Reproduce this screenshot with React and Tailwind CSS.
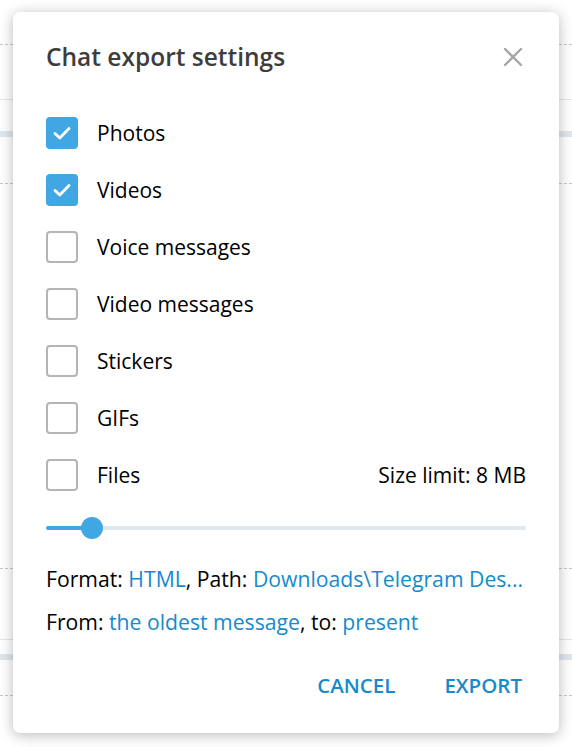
import React from "react";

const items = [
  { label: "Photos", checked: true },
  { label: "Videos", checked: true },
  { label: "Voice messages", checked: false },
  { label: "Video messages", checked: false },
  { label: "Stickers", checked: false },
  { label: "GIFs", checked: false },
];

function Box({ checked }) {
  if (checked) {
    return (
      <div className="w-[32px] h-[32px] rounded-[4px] bg-[#40a7e3] flex items-center justify-center shrink-0">
        <svg width="20" height="16" viewBox="0 0 20 16">
          <path d="M3 8.5 L7.8 13 L17 3.5" fill="none" stroke="white" strokeWidth="2.8" strokeLinecap="round" strokeLinejoin="round" />
        </svg>
      </div>
    );
  }
  return <div className="w-[32px] h-[32px] rounded-[4px] border-[2.5px] border-[#b5b5b5] shrink-0" />;
}

export default function App() {
  return (
    <div className="relative w-[572px] h-[747px] bg-white overflow-hidden" style={{ fontFamily: '"Open Sans", sans-serif' }}>
      <div className="absolute inset-0 flex flex-col">
        <div className="h-[44px]" />
        <div className="h-0 border-t border-dashed border-[#c8c8c8]" />
        <div className="h-[54px]" />
        <div className="h-0 border-t border-[#e6e6e6]" />
        <div className="h-[31px]" />
        <div className="h-[6px] bg-[#dfe7ee]" />
        <div className="h-[46px]" />
        <div className="h-0 border-t border-dashed border-[#c8c8c8]" />
        <div className="h-[384px]" />
        <div className="h-0 border-t border-dashed border-[#c8c8c8]" />
        <div className="h-[70px]" />
        <div className="h-0 border-t border-[#e6e6e6]" />
        <div className="h-[14px]" />
        <div className="h-[6px] bg-[#dfe7ee]" />
        <div className="h-[35px]" />
        <div className="h-0 border-t border-dashed border-[#c8c8c8]" />
      </div>
      <div className="absolute left-[13px] top-[12px] w-[546px] h-[721px] bg-white rounded-[7px] shadow-[0_2px_14px_rgba(0,0,0,0.28)] flex flex-col px-[33px]">
        <div className="flex items-start justify-between h-[105px] pt-[33px]">
          <div className="text-[24.5px] font-semibold text-[#3d3d3d] leading-none">Chat export settings</div>
          <svg width="20" height="20" viewBox="0 0 20 20" className="mr-[3px] mt-[2px]">
            <path d="M2 2 L18 18 M18 2 L2 18" stroke="#a6a6a6" strokeWidth="2.4" strokeLinecap="round" />
          </svg>
        </div>
        <div className="flex flex-col gap-[25px]">
          {items.map((it) => (
            <div key={it.label} className="flex items-center h-[32px]">
              <Box checked={it.checked} />
              <span className="ml-[19px] text-[21px] text-black leading-none">{it.label}</span>
            </div>
          ))}
          <div className="flex items-center h-[32px]">
            <Box checked={false} />
            <span className="ml-[19px] text-[21px] text-black leading-none">Files</span>
            <span className="ml-auto text-[21px] text-black leading-none">Size limit: 8 MB</span>
          </div>
        </div>
        <div className="relative mt-[26px] h-[22px] flex items-center">
          <div className="w-full h-[4px] rounded-full bg-[#e1e8ee]" />
          <div className="absolute left-0 top-[9px] w-[46px] h-[4px] rounded-full bg-[#40a7e3]" />
          <div className="absolute left-[35px] top-0 w-[22px] h-[22px] rounded-full bg-[#40a7e3]" />
        </div>
        <div className="mt-[26px] text-[21.2px] leading-[28px] text-black whitespace-nowrap">
          Format: <span className="text-[#168acd]">HTML</span>, Path: <span className="text-[#168acd]">Downloads\Telegram Des...</span>
        </div>
        <div className="mt-[15px] text-[21.2px] leading-[28px] text-black whitespace-nowrap">
          From: <span className="text-[#168acd]">the oldest message</span>, to: <span className="text-[#168acd]">present</span>
        </div>
        <div className="flex justify-end gap-[49px] mt-[39px] pr-[4px] text-[20.5px] font-semibold text-[#168acd] leading-none">
          <span>CANCEL</span>
          <span>EXPORT</span>
        </div>
      </div>
    </div>
  );
}
